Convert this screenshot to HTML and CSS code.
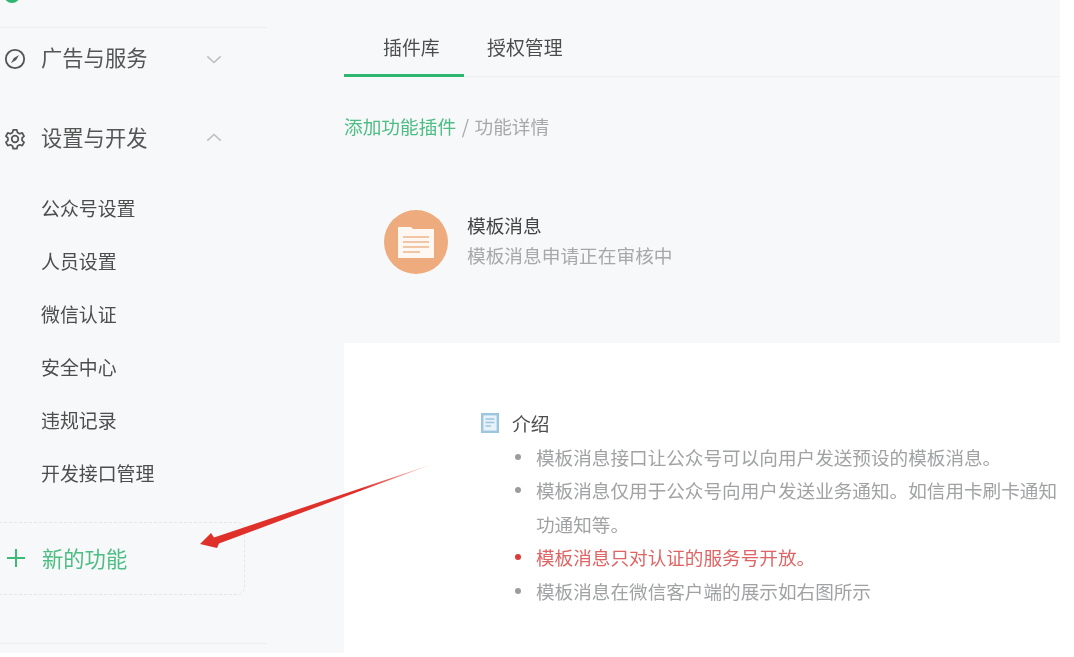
FILE: index.html
```html
<!DOCTYPE html>
<html lang="zh-CN">
<head>
    <meta charset="UTF-8">
    <title>模板消息</title>
    <link rel="stylesheet" href="styles.css">
</head>
<body>
    <div class="page">
        <aside class="sidebar">
            <div class="logo-row"><span class="logo-dot"></span></div>

            <div class="nav-title first">
                <svg class="nav-icon" viewBox="0 0 24 24">
                    <circle cx="12" cy="12" r="10" fill="none" stroke="#555" stroke-width="2"/>
                    <path d="M16.5 7.5 13.2 13.2 7.5 16.5 10.8 10.8Z" fill="#555"/>
                </svg>
                <span class="nav-text">广告与服务</span>
                <svg class="chevron" viewBox="0 0 18 10"><path d="M1.5 1.5 9 8.5 16.5 1.5" fill="none" stroke="#bdbdbd" stroke-width="1.6"/></svg>
            </div>

            <div class="nav-title second">
                <svg class="nav-icon" viewBox="0 0 24 24">
                    <path d="M10 2h4l.7 3 2.3 1.3 2.9-.9 2 3.5-2.2 2.1v2.6l2.2 2.1-2 3.5-2.9-.9-2.3 1.3-.7 3h-4l-.7-3-2.3-1.3-2.9.9-2-3.5 2.2-2.1v-2.6L2.1 8.9l2-3.5 2.9.9 2.3-1.3Z" fill="none" stroke="#555" stroke-width="1.9" stroke-linejoin="round"/>
                    <circle cx="12" cy="12" r="3.6" fill="none" stroke="#555" stroke-width="1.9"/>
                </svg>
                <span class="nav-text">设置与开发</span>
                <svg class="chevron up" viewBox="0 0 18 10"><path d="M1.5 8.5 9 1.5 16.5 8.5" fill="none" stroke="#bdbdbd" stroke-width="1.6"/></svg>
            </div>

            <ul class="sub-nav">
                <li>公众号设置</li>
                <li>人员设置</li>
                <li>微信认证</li>
                <li>安全中心</li>
                <li>违规记录</li>
                <li>开发接口管理</li>
            </ul>

            <div class="new-feature">
                <svg class="plus" viewBox="0 0 20 20"><path d="M10 1v18M1 10h18" fill="none" stroke="#3dba78" stroke-width="2"/></svg>
                <span>新的功能</span>
            </div>
            <div class="sidebar-end"></div>
        </aside>

        <main class="content">
            <nav class="tabs">
                <a class="tab active">插件库</a>
                <a class="tab">授权管理</a>
            </nav>

            <div class="crumbs"><span class="crumb-link">添加功能插件</span><span class="crumb-sep">/</span>功能详情</div>

            <div class="plugin">
                <div class="plugin-icon">
                    <svg viewBox="0 0 36 31" width="36" height="31">
                        <path d="M0 0H13L15 2H36V31H0Z" fill="#fff8f2"/>
                        <path d="M5 10H31M5 15H31M5 20H31M5 25H22" stroke="#edb58c" stroke-width="1.6"/>
                    </svg>
                </div>
                <div class="plugin-text">
                    <div class="plugin-name">模板消息</div>
                    <div class="plugin-status">模板消息申请正在审核中</div>
                </div>
            </div>

            <section class="card">
                <h2 class="card-title">
                    <svg class="doc-icon" viewBox="0 0 18 20">
                        <rect x="1.2" y="1.2" width="15.6" height="17.6" fill="#e8f2f8" stroke="#9cc5df" stroke-width="2.4"/>
                        <path d="M4.5 6H13.5M4.5 9.5H13.5M4.5 13H10" stroke="#9cc5df" stroke-width="1.4"/>
                    </svg>
                    介绍
                </h2>
                <ul class="intro">
                    <li>模板消息接口让公众号可以向用户发送预设的模板消息。</li>
                    <li>模板消息仅用于公众号向用户发送业务通知。如信用卡刷卡通知<br>功通知等。</li>
                    <li class="warn">模板消息只对认证的服务号开放。</li>
                    <li>模板消息在微信客户端的展示如右图所示</li>
                </ul>
            </section>
        </main>

        <svg class="arrow" viewBox="0 0 240 90" width="240" height="90">
            <defs>
                <linearGradient id="arrowFade" x1="1" y1="80" x2="231" y2="1" gradientUnits="userSpaceOnUse">
                    <stop offset="0.7" stop-color="#e0302a"/>
                    <stop offset="1" stop-color="#e0302a" stop-opacity="0.3"/>
                </linearGradient>
            </defs>
            <path d="M231 1 20 79.5 18 84 1 80 12 69 15 73.5Z" fill="url(#arrowFade)"/>
        </svg>
    </div>
</body>
</html>
```

FILE: styles.css
```css
* {
    box-sizing: border-box;
}

html, body {
    margin: 0;
    height: 100%;
    background: #fff;
    overflow: hidden;
}

body {
    font-family: "Noto Sans CJK SC", "Liberation Sans", sans-serif;
    font-size: 18.7px;
    color: #4d4d4d;
}

.page {
    position: relative;
    display: flex;
    width: 1060px;
    height: 653px;
    background: #f6f8f9;
    overflow: hidden;
    filter: blur(0.45px);
}

/* left menu */
.sidebar {
    width: 267px;
    flex-shrink: 0;
}

.logo-row {
    height: 28px;
    border-bottom: 1px solid #eceef0;
    overflow: hidden;
}

.logo-dot {
    display: block;
    width: 16px;
    height: 16px;
    margin: -13px 0 0 4px;
    border-radius: 50%;
    background: #2fb671;
}

.nav-title {
    display: flex;
    align-items: center;
    height: 30px;
    padding-left: 4px;
    font-size: 21.3px;
    color: #555;
}

.nav-title.first {
    margin-top: 16px;
}

.nav-title.second {
    margin-top: 50px;
}

.nav-icon {
    width: 22px;
    height: 22px;
}

.nav-text {
    margin: 0 0 5px 15px;
    width: 165px;
}

.chevron {
    width: 16px;
    height: 9px;
}

.chevron.up {
    margin-bottom: 4px;
}

.sub-nav {
    list-style: none;
    margin: 40px 0 0;
    padding: 0 0 0 41px;
    font-size: 18.9px;
}

.sub-nav li {
    height: 53px;
    line-height: 28px;
}

.new-feature {
    display: flex;
    align-items: center;
    width: 246px;
    height: 73px;
    margin: 10px 0 0 -1px;
    padding: 0 0 2px 6px;
    border: 1px dashed #e3e5e7;
    border-radius: 0 8px 8px 0;
    font-size: 21.3px;
    color: #4dbd83;
}

.plus {
    width: 20px;
    height: 20px;
    margin-right: 16px;
}

.sidebar-end {
    margin-top: 48px;
    border-top: 1px solid #eceef0;
}

/* right side */
.content {
    flex: 1;
    padding-left: 77px;
    min-width: 0;
}

.tabs {
    display: flex;
    height: 77px;
    padding-top: 33px;
    border-bottom: 1px solid #eceef0;
    font-size: 18.9px;
}

.tab {
    height: 44px;
    line-height: 28px;
    color: #4d4d4d;
}

.tab.active {
    width: 120px;
    padding-left: 39px;
    border-bottom: 3px solid #2fb671;
}

.tab + .tab {
    margin-left: 23px;
}

.crumbs {
    margin-top: 35px;
    line-height: 28px;
    color: #a6a8aa;
}

.crumb-link {
    color: #4dbd83;
}

.crumb-sep {
    margin: 0 5.5px;
}

.plugin {
    display: flex;
    align-items: center;
    margin: 70px 0 0 40px;
    gap: 19px;
}

.plugin-icon {
    display: flex;
    align-items: center;
    justify-content: center;
    width: 64px;
    height: 64px;
    border-radius: 50%;
    background: #eeab7e;
}

.plugin-text {
    margin-top: -5px;
}

.plugin-name {
    line-height: 30px;
    color: #444;
}

.plugin-status {
    line-height: 30px;
    color: #a6a8aa;
}

.card {
    margin-top: 69px;
    height: 320px;
    padding: 66px 0 0 137px;
    background: #fff;
}

.card-title {
    display: flex;
    align-items: center;
    gap: 13px;
    margin: 0;
    font-size: 18.7px;
    font-weight: 400;
    line-height: 28px;
    color: #4d4d4d;
}

.doc-icon {
    width: 18px;
    height: 20px;
}

.intro {
    margin: 3px 0 0;
    padding: 0 0 0 55px;
    width: 578px;
    list-style: none;
    font-size: 18.62px;
    color: #a0a2a4;
}

.intro li {
    position: relative;
    line-height: 33.4px;
}

.intro li::before {
    content: "";
    position: absolute;
    left: -21px;
    top: 14px;
    width: 6px;
    height: 6px;
    border-radius: 50%;
    background: #9a9c9e;
}

.intro li.warn {
    color: #e06464;
}

.intro li.warn::before {
    background: #dd3a3a;
}

/* annotation drawn on top of the screenshot */
.arrow {
    position: absolute;
    left: 199px;
    top: 464px;
}
```
